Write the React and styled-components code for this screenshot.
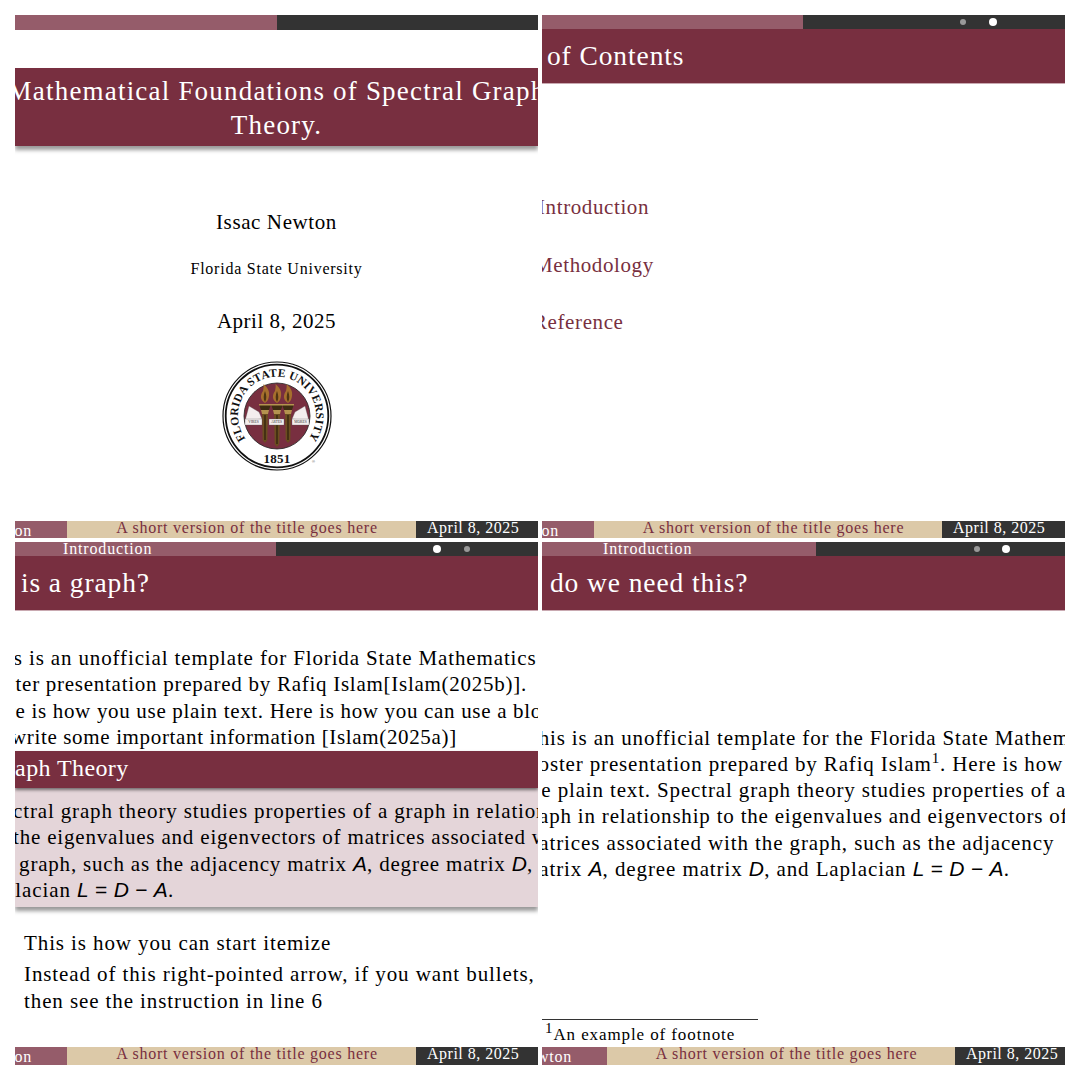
import React from 'react'
import styled, { createGlobalStyle } from 'styled-components'

const GlobalStyle = createGlobalStyle`
  html, body {
    margin: 0;
    background: #fff;
  }
`

const maroon = '#782f40'
const rose = '#955c6a'
const dark = '#333333'
const tan = '#dcc9a8'

const Deck = styled.div`
  display: grid;
  grid-template-columns: 523px 523px;
  grid-auto-rows: 523px;
  gap: 4px;
  padding: 15px;
  font-family: "Liberation Serif", "Times New Roman", serif;
  color: #000;
`

const Slide = styled.section`
  display: flex;
  flex-direction: column;
  overflow: hidden;
  background: #fff;
`

const Nav = styled.div`
  display: flex;
  flex: none;
  height: ${p => p.$height || 14}px;
`

const NavSection = styled.div`
  width: ${p => p.$width}px;
  flex: none;
  background: ${rose};
  color: #fff;
  font-size: 16px;
  line-height: 13px;
  letter-spacing: 0.85px;
  padding-left: ${p => p.$indent || 0}px;
  box-sizing: border-box;
`

const NavDots = styled.div`
  flex: 1;
  display: flex;
  align-items: center;
  gap: ${p => p.$gap || 22}px;
  background: ${dark};
  padding-left: ${p => p.$indent}px;
`

const DotSlot = styled.span`
  width: 8px;
  display: flex;
  justify-content: center;
`

const Dot = styled.span`
  display: block;
  width: ${p => (p.$active ? 8 : 6)}px;
  height: ${p => (p.$active ? 8 : 6)}px;
  border-radius: 50%;
  background: ${p => (p.$active ? '#fff' : '#999')};
`

const FrameTitle = styled.h2`
  flex: none;
  height: 55px;
  margin: 0;
  box-sizing: border-box;
  border-bottom: 1px solid #c9a9b1;
  background: ${maroon};
  color: #fff;
  font-size: 27.5px;
  font-weight: 400;
  line-height: 54px;
  letter-spacing: 0.9px;
  white-space: nowrap;
  text-indent: ${p => p.$x}px;
`

const Content = styled.div`
  flex: 1;
  min-height: 0;
  display: flex;
  flex-direction: column;
  padding-top: ${p => p.$top || 0}px;
`

const TitleBox = styled.div`
  background: ${maroon};
  color: #fff;
  height: 78px;
  padding-top: 6px;
  box-sizing: border-box;
  box-shadow: 0 4px 4px rgba(0, 0, 0, 0.4);
  margin-bottom: 64px;
  font-size: 27px;
  line-height: 34px;
  letter-spacing: 1.2px;
`

const TitleLine = styled.div`
  display: flex;
  justify-content: center;
  white-space: nowrap;
`

const Centered = styled.div`
  text-align: center;
  font-size: ${p => p.$size}px;
  line-height: 24px;
  letter-spacing: ${p => p.$track}px;
  margin-bottom: ${p => p.$after}px;
`

const SealWrap = styled.div`
  display: flex;
  justify-content: center;
`

const TocItem = styled.div`
  color: ${maroon};
  font-size: 21px;
  line-height: 24px;
  letter-spacing: 0.6px;
  margin-left: ${p => p.$x}px;
  margin-bottom: 33.5px;
  white-space: nowrap;
`

const Line = styled.div`
  font-size: 21px;
  line-height: 26.25px;
  letter-spacing: ${p => p.$track || 0.85}px;
  white-space: nowrap;
  margin-left: ${p => p.$x}px;
`

const BlockHead = styled.div`
  background: ${maroon};
  color: #fff;
  height: 37px;
  margin-top: 1px;
  font-size: 24px;
  line-height: 35px;
  letter-spacing: 0.4px;
  white-space: nowrap;
  box-shadow: 0 2px 3px rgba(0, 0, 0, 0.5);
  position: relative;
  z-index: 1;
`

const HeadText = styled.span`
  margin-left: ${p => p.$x}px;
`

const BlockBody = styled.div`
  background: #e4d5d9;
  height: 119px;
  padding-top: 10px;
  box-sizing: border-box;
  box-shadow: 0 4px 4px rgba(0, 0, 0, 0.4);
  margin-bottom: 23px;
`

const Item = styled.div`
  font-size: 21px;
  line-height: 26.25px;
  letter-spacing: 0.9px;
  white-space: nowrap;
  margin-left: 9px;
  margin-bottom: ${p => p.$after || 0}px;
`

const Math = styled.span`
  font-family: "Liberation Sans", Arial, sans-serif;
  font-style: ${p => (p.$upright ? 'normal' : 'italic')};
  letter-spacing: 0.2px;
`

const Sup = styled.sup`
  font-size: 15px;
  line-height: 0;
`

const Spacer = styled.div`
  flex: 1;
`

const Footnote = styled.div`
  font-size: 17px;
  line-height: 20px;
  letter-spacing: 0.9px;
  white-space: nowrap;
  padding-left: 3px;
  padding-bottom: 2px;
  &::before {
    content: "";
    display: block;
    width: 216px;
    margin-left: -3px;
    margin-bottom: 5px;
    border-top: 1px solid #333;
  }
`

const Footer = styled.footer`
  flex: none;
  display: flex;
  height: ${p => p.$height || 18}px;
  font-size: 16px;
  line-height: 13px;
  letter-spacing: 0.77px;
  white-space: nowrap;
`

const FootAuthor = styled.div`
  width: ${p => p.$width}px;
  flex: none;
  display: flex;
  justify-content: flex-end;
  overflow: hidden;
  box-sizing: border-box;
  padding-right: 35px;
  padding-top: 3px;
  background: ${rose};
  color: #fff;
`

const FootTitle = styled.div`
  flex: 1;
  text-align: center;
  padding-left: 11px;
  background: ${tan};
  color: ${maroon};
`

const FootDate = styled.div`
  width: ${p => p.$width}px;
  flex: none;
  box-sizing: border-box;
  padding-left: 11px;
  letter-spacing: 0.5px;
  background: ${dark};
  color: #fff;
`

function SlideFooter({ author, date, height }) {
  return (
    <Footer $height={height}>
      <FootAuthor $width={author}><span>Issac Newton</span></FootAuthor>
      <FootTitle>A short version of the title goes here</FootTitle>
      <FootDate $width={date}>April 8, 2025</FootDate>
    </Footer>
  )
}

function Dots({ active, indent, gap }) {
  return (
    <NavDots $indent={indent} $gap={gap}>
      {[0, 1].map(i => (
        <DotSlot key={i}><Dot $active={i === active} /></DotSlot>
      ))}
    </NavDots>
  )
}

function Torch({ x, end }) {
  return (
    <g transform={`translate(${x} 55)`}>
      <path d="M0 -13C-5 -16 -5 -21 -2 -25C-1.500 -28 -1 -30 -1.500 -32C2 -29 5 -25 4 -20C3.500 -17 3 -15 0 -13z" fill="#a66f2d" />
      <path d="M0 -14C-2 -17 -1.500 -21 0 -25C1.500 -21 2 -17 0 -14z" fill="#4f3413" />
      <path d="M-6 -12H6L4 -6H-4z" fill="#3d2c12" />
      <path d="M-6 -12H6V-10.500H-6z" fill="#b4934f" />
      <path d="M-4 -6H4L3 -2H-3z" fill="#b4934f" />
      <path d={`M-3 -2H3L2.300 ${end}L0 ${end + 3}L-2.300 ${end}z`} fill="#6b4d20" />
      <path d={`M-.6 -1H.6V${end}H-.6z`} fill="#2c1f0c" />
    </g>
  )
}

function Seal() {
  return (
    <svg width="110" height="110" viewBox="0 0 110 110" role="img" aria-label="Florida State University seal">
      <defs>
        <path id="sealTop" d="M23 77A39 39 0 1 1 87 77" />
      </defs>
      <circle cx="55" cy="55" r="54" fill="#fff" stroke="#111" strokeWidth="1.200" />
      <circle cx="55" cy="55" r="51.300" fill="none" stroke="#111" strokeWidth="1.800" />
      <circle cx="55" cy="55" r="33" fill={maroon} stroke="#222" strokeWidth="0.800" />
      <text fontFamily="Liberation Serif, serif" fontSize="11.500" fontWeight="700" fill="#111" letterSpacing="0.2">
        <textPath href="#sealTop" startOffset="50%" textAnchor="middle">FLORIDA STATE UNIVERSITY</textPath>
      </text>
      <text x="55" y="102" textAnchor="middle" fontFamily="Liberation Serif, serif" fontSize="13" fontWeight="700" fill="#111" letterSpacing="0.2">1851</text>
      <Torch x={43} end={24} />
      <Torch x={55} end={28} />
      <Torch x={66} end={24} />
      <path d="M23 60L27 45L37 51L40 58z" fill="#f4eeee" stroke="#555" strokeWidth="0.300" />
      <path d="M87 60L83 45L73 51L70 58z" fill="#f4eeee" stroke="#555" strokeWidth="0.300" />
      <path d="M23 58H40V64H23zM47 58H62V64H47zM70 58H87V64H70z" fill="#f4eeee" stroke="#555" strokeWidth="0.300" />
      <text x="31.500" y="62.300" textAnchor="middle" fontFamily="Liberation Serif, serif" fontSize="3.600" fill="#333">VIRES</text>
      <text x="54.500" y="62.300" textAnchor="middle" fontFamily="Liberation Serif, serif" fontSize="3.600" fill="#333">ARTES</text>
      <text x="78.500" y="62.300" textAnchor="middle" fontFamily="Liberation Serif, serif" fontSize="3.600" fill="#333">MORES</text>
      <text x="90" y="102" fontFamily="Liberation Sans, sans-serif" fontSize="4" fill="#555">®</text>
    </svg>
  )
}

export default function App() {
  return (
    <>
      <GlobalStyle />
      <Deck>
        <Slide>
          <Nav $height={15}>
            <NavSection $width={262} />
            <NavDots />
          </Nav>
          <Content $top={38}>
            <TitleBox>
              <TitleLine>Mathematical Foundations of Spectral Graph</TitleLine>
              <TitleLine>Theory.</TitleLine>
            </TitleBox>
            <Centered $size={21} $track={0.6} $after={23}>Issac Newton</Centered>
            <Centered $size={16} $track={0.76} $after={28}>Florida State University</Centered>
            <Centered $size={21} $track={0.5} $after={28}>April 8, 2025</Centered>
            <SealWrap><Seal /></SealWrap>
          </Content>
          <SlideFooter author={52} date={122} height={17} />
        </Slide>

        <Slide>
          <Nav>
            <NavSection $width={261} />
            <Dots active={1} indent={156} />
          </Nav>
          <FrameTitle $x={-68}>Table of Contents</FrameTitle>
          <Content $top={111}>
            <TocItem $x={-4}>Introduction</TocItem>
            <TocItem $x={-8}>Methodology</TocItem>
            <TocItem $x={-9}>Reference</TocItem>
          </Content>
          <SlideFooter author={52} date={123} height={17} />
        </Slide>

        <Slide>
          <Nav>
            <NavSection $width={261} $indent={48}>Introduction</NavSection>
            <Dots active={0} indent={157} />
          </Nav>
          <FrameTitle $x={-65}>What is a graph?</FrameTitle>
          <Content $top={34}>
            <Line $x={-33} $track={0.87}>This is an unofficial template for Florida State Mathematics</Line>
            <Line $x={-32} $track={0.73}>Poster presentation prepared by Rafiq Islam[Islam(2025b)].</Line>
            <Line $x={-33} $track={0.68}>Here is how you use plain text. Here is how you can use a block to</Line>
            <Line $x={-4} $track={0.65}>write some important information [Islam(2025a)]</Line>
            <BlockHead><HeadText $x={-26}>Graph Theory</HeadText></BlockHead>
            <BlockBody>
              <Line $x={-36}>Spectral graph theory studies properties of a graph in relationship</Line>
              <Line $x={-2} $track={0.82}>the eigenvalues and eigenvectors of matrices associated with</Line>
              <Line $x={-30} $track={0.8}>the graph, such as the adjacency matrix <Math>A</Math>, degree matrix <Math>D</Math>, and</Line>
              <Line $x={-35} $track={0.9}>Laplacian <Math>L</Math> <Math $upright>=</Math> <Math>D</Math> <Math $upright>−</Math> <Math>A</Math>.</Line>
            </BlockBody>
            <Item $after={5}>This is how you can start itemize</Item>
            <Item>Instead of this right-pointed arrow, if you want bullets,</Item>
            <Item>then see the instruction in line 6</Item>
          </Content>
          <SlideFooter author={52} date={122} />
        </Slide>

        <Slide>
          <Nav>
            <NavSection $width={274} $indent={61}>Introduction</NavSection>
            <Dots active={1} indent={157} gap={21} />
          </Nav>
          <FrameTitle $x={-56}>Why do we need this?</FrameTitle>
          <Content $top={113.7}>
            <Line $x={-17}>This is an unofficial template for the Florida State Mathematics</Line>
            <Line $x={-16}>Poster presentation prepared by Rafiq Islam<Sup>1</Sup>. Here is how you</Line>
            <Line $x={-21}>use plain text. Spectral graph theory studies properties of a</Line>
            <Line $x={-22} $track={0.8}>graph in relationship to the eigenvalues and eigenvectors of</Line>
            <Line $x={-20} $track={0.9}>matrices associated with the graph, such as the adjacency</Line>
            <Line $x={-20} $track={0.9}>matrix <Math>A</Math>, degree matrix <Math>D</Math>, and Laplacian <Math>L</Math> <Math $upright>=</Math> <Math>D</Math> <Math $upright>−</Math> <Math>A</Math>.</Line>
            <Spacer />
            <Footnote><Sup>1</Sup>An example of footnote</Footnote>
          </Content>
          <SlideFooter author={65} date={110} />
        </Slide>
      </Deck>
    </>
  )
}
